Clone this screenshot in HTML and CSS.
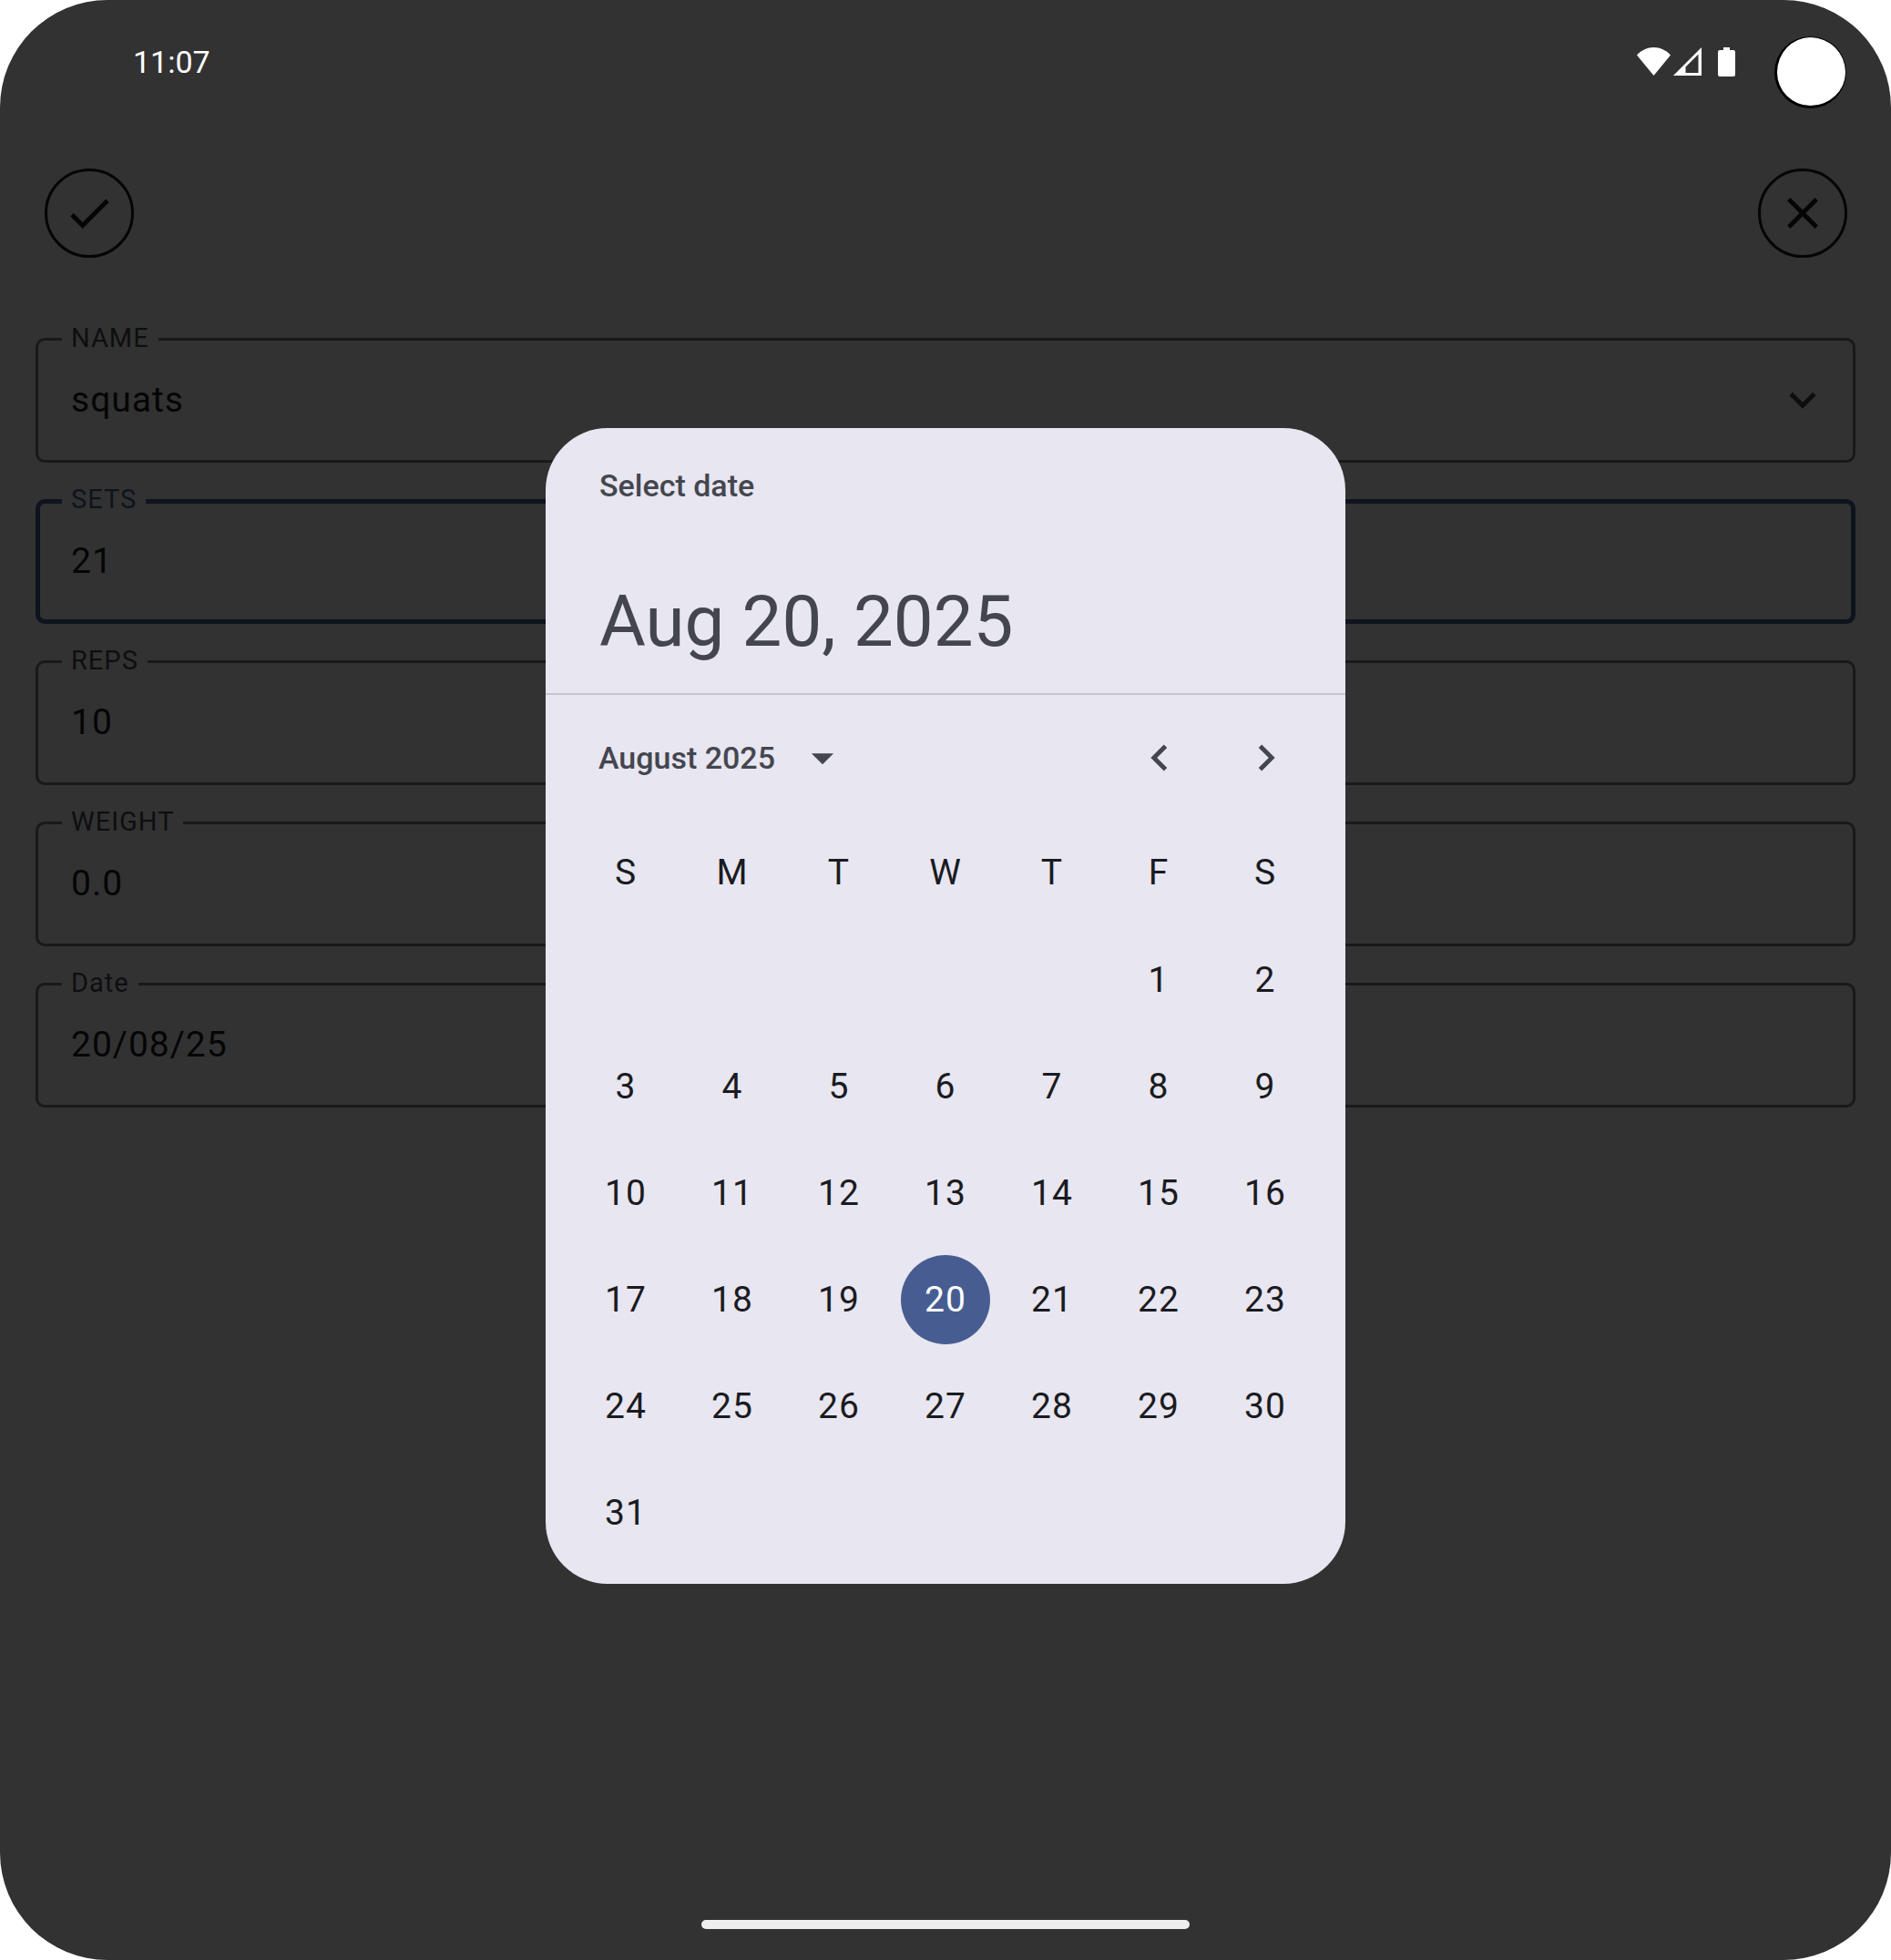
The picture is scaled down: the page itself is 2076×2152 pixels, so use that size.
FILE: index.html
```html
<!DOCTYPE html>
<html lang="en">
<head>
<meta charset="utf-8">
<meta name="viewport" content="width=device-width, initial-scale=1">
<title>Edit exercise</title>
<link rel="stylesheet" href="styles.css">
</head>
<body>
<div class="screen">
  <header class="status-bar">
    <time class="clock">11:07</time>
    <div class="status-icons">
      <svg class="wifi" viewBox="0 0 37 31" aria-hidden="true"><path d="M0 8.500C5 3 11.500 0 18.500 0S32 3 37 8.500L18.500 31z"/></svg>
      <svg class="signal" viewBox="0 0 31 31" aria-hidden="true"><path fill-rule="evenodd" d="M31 0V31H0zM27.500 7.500L13.500 21.500V28H27.500z"/></svg>
      <svg class="battery" viewBox="0 0 19 32" aria-hidden="true"><path d="M6 0h7v3h4a2 2 0 0 1 2 2v25a2 2 0 0 1-2 2H2a2 2 0 0 1-2-2V5a2 2 0 0 1 2-2h4z"/></svg>
    </div>
    <span class="camera"></span>
  </header>

  <main class="editor">
    <div class="toolbar">
      <button class="round-button" type="button" aria-label="Save">
        <svg class="icon" viewBox="0 0 24 24" aria-hidden="true"><path d="M9 16.170L4.830 12l-1.420 1.410L9 19 21 7l-1.410-1.410z"/></svg>
      </button>
      <button class="round-button" type="button" aria-label="Cancel">
        <svg class="icon" viewBox="0 0 24 24" aria-hidden="true"><path d="M19 6.410L17.590 5 12 10.590 6.410 5 5 6.410 10.590 12 5 17.590 6.410 19 12 13.410 17.590 19 19 17.590 13.410 12z"/></svg>
      </button>
    </div>

    <form class="fields">
      <fieldset class="field field-select">
        <legend class="legend"><label for="name">NAME</label></legend>
        <div class="select-wrap">
          <select class="control" id="name"><option>squats</option></select>
          <svg class="icon chevron" viewBox="0 0 24 24" aria-hidden="true"><path d="M7.410 8.590L12 13.170l4.590-4.580L18 10l-6 6-6-6z"/></svg>
        </div>
      </fieldset>
      <fieldset class="field field-active">
        <legend class="legend"><label for="sets">SETS</label></legend>
        <input class="control" id="sets" type="text" value="21">
      </fieldset>
      <fieldset class="field">
        <legend class="legend"><label for="reps">REPS</label></legend>
        <input class="control" id="reps" type="text" value="10">
      </fieldset>
      <fieldset class="field">
        <legend class="legend"><label for="weight">WEIGHT</label></legend>
        <input class="control" id="weight" type="text" value="0.0">
      </fieldset>
      <fieldset class="field">
        <legend class="legend"><label for="date">Date</label></legend>
        <input class="control" id="date" type="text" value="20/08/25">
      </fieldset>
    </form>
  </main>

  <footer class="nav-bar"><span class="nav-handle"></span></footer>
</div>

<div class="overlay">
  <section class="dialog" role="dialog" aria-labelledby="dialog-title">
    <header class="dialog-header">
      <h2 class="dialog-title" id="dialog-title">Select date</h2>
      <p class="dialog-date">Aug 20, 2025</p>
    </header>
    <div class="month-bar">
      <button class="month-button" type="button">
        August 2025
        <svg class="icon" viewBox="0 0 24 24" aria-hidden="true"><path d="M7 10l5 5 5-5z"/></svg>
      </button>
      <div class="month-arrows">
        <button class="arrow-button" type="button" aria-label="Previous month">
          <svg class="icon" viewBox="0 0 24 24" aria-hidden="true"><path d="M15.410 16.590L10.830 12l4.580-4.590L14 6l-6 6 6 6z"/></svg>
        </button>
        <button class="arrow-button" type="button" aria-label="Next month">
          <svg class="icon" viewBox="0 0 24 24" aria-hidden="true"><path d="M8.590 16.590L13.170 12 8.590 7.410 10 6l6 6-6 6z"/></svg>
        </button>
      </div>
    </div>
    <table class="calendar">
      <thead>
        <tr><th>S</th><th>M</th><th>T</th><th>W</th><th>T</th><th>F</th><th>S</th></tr>
      </thead>
      <tbody>
        <tr><td></td><td></td><td></td><td></td><td></td><td><button class="day" type="button">1</button></td><td><button class="day" type="button">2</button></td></tr>
        <tr><td><button class="day" type="button">3</button></td><td><button class="day" type="button">4</button></td><td><button class="day" type="button">5</button></td><td><button class="day" type="button">6</button></td><td><button class="day" type="button">7</button></td><td><button class="day" type="button">8</button></td><td><button class="day" type="button">9</button></td></tr>
        <tr><td><button class="day" type="button">10</button></td><td><button class="day" type="button">11</button></td><td><button class="day" type="button">12</button></td><td><button class="day" type="button">13</button></td><td><button class="day" type="button">14</button></td><td><button class="day" type="button">15</button></td><td><button class="day" type="button">16</button></td></tr>
        <tr><td><button class="day" type="button">17</button></td><td><button class="day" type="button">18</button></td><td><button class="day" type="button">19</button></td><td><button class="day day-selected" type="button" aria-pressed="true">20</button></td><td><button class="day" type="button">21</button></td><td><button class="day" type="button">22</button></td><td><button class="day" type="button">23</button></td></tr>
        <tr><td><button class="day" type="button">24</button></td><td><button class="day" type="button">25</button></td><td><button class="day" type="button">26</button></td><td><button class="day" type="button">27</button></td><td><button class="day" type="button">28</button></td><td><button class="day" type="button">29</button></td><td><button class="day" type="button">30</button></td></tr>
        <tr><td><button class="day" type="button">31</button></td><td></td><td></td><td></td><td></td><td></td><td></td></tr>
      </tbody>
    </table>
  </section>
</div>
</body>
</html>
```

FILE: styles.css
```css
*,
*::before,
*::after {
  box-sizing: border-box;
}

body {
  margin: 0;
  background: #ffffff;
  font-family: Roboto, "Liberation Sans", sans-serif;
}

button,
input,
select {
  margin: 0;
  padding: 0;
  border: 0;
  outline: 0;
  border-radius: 0;
  background: none;
  color: inherit;
  font: inherit;
  letter-spacing: inherit;
}

.icon {
  display: block;
  flex: none;
  width: 58px;
  height: 58px;
  fill: currentColor;
}

.screen {
  position: relative;
  display: flex;
  flex-direction: column;
  min-height: 100vh;
  border-radius: 118px;
  background: #323232;
  color: #050506;
}

/* Status bar */
.status-bar {
  display: flex;
  align-items: center;
  justify-content: space-between;
  height: 136px;
  padding: 0 171px 0 146px;
  color: #ffffff;
}

.clock {
  font-size: 34px;
  line-height: 40px;
}

.status-icons {
  display: flex;
  align-items: flex-start;
  gap: 3px;
  fill: #ffffff;
}

.wifi {
  width: 37px;
  height: 31px;
}

.signal {
  width: 31px;
  height: 31px;
}

.battery {
  width: 19px;
  height: 32px;
  margin-left: 15px;
}

.camera {
  position: absolute;
  top: 40px;
  right: 49px;
  width: 79px;
  height: 79px;
  border: solid #000000;
  border-width: 1px 1px 3px 3px;
  border-radius: 50%;
  background: #ffffff;
}

/* Editor */
.editor {
  flex: 1;
}

.toolbar {
  display: flex;
  justify-content: space-between;
  padding: 49px 48px 72px 49px;
}

.round-button {
  display: grid;
  place-items: center;
  width: 98px;
  height: 98px;
  border: 3px solid #050506;
  border-radius: 50%;
}

.fields {
  display: flex;
  flex-direction: column;
  gap: 24px;
  padding: 0 39px;
}

.field {
  min-width: 0;
  margin: 0;
  padding: 0 0 18px;
  border: 3px solid #18191a;
  border-radius: 10px;
}

.legend {
  margin-left: 26px;
  padding: 0 10px 2px;
  color: #0e0e11;
  font-size: 29px;
  line-height: 33px;
  letter-spacing: 1px;
}

.legend label {
  display: block;
}

.control {
  display: block;
  width: 100%;
  height: 97px;
  padding: 0 36px;
  font-size: 39px;
  letter-spacing: 1px;
}

.field-active {
  border: 5px solid #0e131e;
}

.field-active .legend {
  margin-left: 24px;
  padding-bottom: 4px;
  color: #0e131e;
}

.field-active .control {
  height: 93px;
  padding: 0 34px;
}

.select-wrap {
  display: grid;
  align-items: center;
}

.select-wrap > * {
  grid-area: 1 / 1;
}

.select-wrap .control {
  appearance: none;
}

.chevron {
  justify-self: end;
  margin-right: 26px;
  color: #0e0e11;
  pointer-events: none;
}

.nav-bar {
  display: flex;
  justify-content: center;
  padding: 34px 0;
}

.nav-handle {
  width: 536px;
  max-width: 50%;
  height: 10px;
  border-radius: 5px;
  background: #eeeeee;
}

/* Date picker */
.overlay {
  position: fixed;
  inset: 0;
  display: flex;
  align-items: center;
  justify-content: center;
  padding: 134px 0 77px;
}

.dialog {
  width: 878px;
  padding-bottom: 20px;
  border-radius: 68px;
  background: #e8e6f0;
  color: #1a1b21;
}

.dialog-header {
  display: flex;
  flex-direction: column;
  gap: 76px;
  padding: 39px 59px 29px;
  border-bottom: 2px solid #c5c5d0;
  color: #44464f;
}

.dialog-title {
  margin: 0;
  font-size: 34px;
  font-weight: 500;
  line-height: 49px;
}

.dialog-date {
  margin: 0;
  font-size: 78px;
  line-height: 98px;
}

.month-bar {
  display: flex;
  align-items: center;
  justify-content: space-between;
  height: 137px;
  padding: 0 29px 0 58px;
  color: #44464f;
}

.month-button {
  display: flex;
  align-items: center;
  gap: 23px;
  font-size: 34px;
  font-weight: 500;
}

.month-arrows {
  display: flex;
}

.arrow-button {
  display: grid;
  place-items: center;
  width: 117px;
  height: 117px;
}

.calendar {
  width: 819px;
  margin: 0 auto;
  border-collapse: collapse;
  table-layout: fixed;
  font-size: 39px;
  letter-spacing: 1px;
}

.calendar th,
.calendar td {
  height: 117px;
  padding: 0;
  font-weight: 400;
  text-align: center;
  vertical-align: middle;
}

.calendar th {
  padding-bottom: 2px;
}

.day {
  display: block;
  width: 98px;
  height: 98px;
  margin: 0 auto;
  border-radius: 50%;
}

.day-selected {
  background: #475d92;
  color: #ffffff;
}
```
